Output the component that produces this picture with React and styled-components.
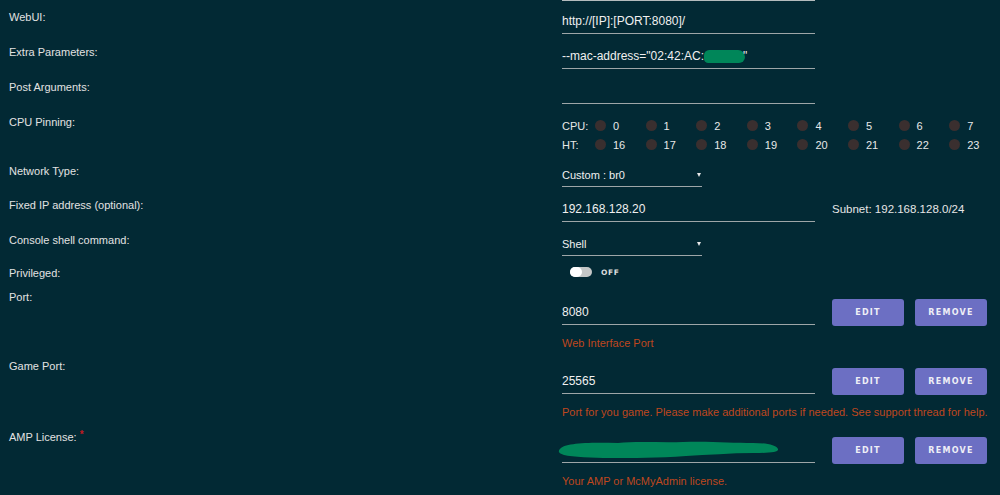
import React from 'react';
import styled, { createGlobalStyle } from 'styled-components';

const GlobalStyle = createGlobalStyle`
  html, body {
    margin: 0;
    padding: 0;
    background: #022934;
  }
  body {
    font-family: "Liberation Sans", Arial, sans-serif;
    color: #e4e4e4;
    overflow: hidden;
  }
`;

const Page = styled.div`
  width: 1000px;
  height: 495px;
  padding-left: 9px;
  box-sizing: border-box;
  overflow: hidden;
`;

const Row = styled.div`
  display: grid;
  grid-template-columns: 553px 1fr;
  height: ${props => props.h}px;
`;

const Label = styled.div`
  padding-top: 10px;
  font-size: 11px;
  line-height: 12px;
  color: #e2e2e2;
  white-space: nowrap;
`;

const Required = styled.span`
  color: #c01a22;
  font-size: 10px;
  font-weight: bold;
  vertical-align: 3px;
  margin-left: 3px;
`;

const Field = styled.div`
  padding-top: ${props => props.pt ?? 13}px;
`;

const Inline = styled.div`
  display: flex;
  align-items: ${props => props.end ? 'flex-end' : 'flex-start'};
`;

const Rule = styled.div`
  width: 253px;
  height: 1px;
  background: #b4bbbd;
`;

const TextInput = styled.div`
  width: 253px;
  height: 14px;
  font-size: 12px;
  line-height: 14px;
  padding-bottom: 5px;
  border-bottom: 1px solid #9ea6a8;
  color: #f0f0f0;
  white-space: nowrap;
  margin-bottom: ${props => props.mb || 0}px;
`;

const Select = styled.div`
  width: 140px;
  height: 14px;
  font-size: 11px;
  line-height: 14px;
  padding-bottom: 4px;
  border-bottom: 1px solid #9ea6a8;
  color: #f0f0f0;
  display: flex;
  justify-content: space-between;
  align-items: center;
`;

const Caret = styled.span`
  width: 0;
  height: 0;
  margin-right: 1px;
  border-left: 2px solid transparent;
  border-right: 2px solid transparent;
  border-top: 4px solid #e8e8e8;
`;

const Redacted = styled.span`
  display: inline-block;
  width: 41px;
  height: 13px;
  margin-right: -2px;
  border-radius: 6px 8px 7px 5px;
  background: #008659;
  vertical-align: -3px;
`;

const Scribble = styled.svg`
  display: block;
  margin: -2px 0 -2px -4px;
`;

const Subnet = styled.div`
  margin-left: 17px;
  font-size: 11.5px;
  line-height: 14px;
  color: #e6e6e6;
`;

const CpuGrid = styled.div`
  display: grid;
  grid-template-columns: 33px repeat(8, 50.6px);
  grid-auto-rows: 19px;
  align-items: center;
  font-size: 11px;
  color: #e8e8e8;
`;

const Core = styled.div`
  display: flex;
  align-items: center;
  gap: 7px;
`;

const Dot = styled.span`
  width: 11px;
  height: 11px;
  border-radius: 50%;
  background: #3a2f2f;
`;

const Switch = styled.div`
  display: flex;
  align-items: center;
  margin-left: 8px;
  gap: 9px;
`;

const Track = styled.div`
  width: 22px;
  height: 10px;
  border-radius: 5px;
  background: #c4c6c6;
  display: flex;
`;

const Knob = styled.div`
  width: 12px;
  height: 10px;
  border-radius: 5px;
  background: #ffffff;
`;

const SwitchText = styled.span`
  font-family: "DejaVu Sans", sans-serif;
  font-weight: bold;
  font-size: 7.5px;
  letter-spacing: 0.6px;
  color: #dcdcdc;
`;

const Button = styled.button`
  width: 72px;
  height: 27px;
  margin-left: ${props => props.first ? 17 : 11}px;
  border: none;
  border-radius: 3px;
  background: #6c6fc3;
  color: #eeeef6;
  font-family: "DejaVu Sans", sans-serif;
  font-weight: bold;
  font-size: 8px;
  letter-spacing: 1.3px;
  padding: 0;
  cursor: pointer;
`;

const Desc = styled.div`
  margin-top: 10px;
  font-size: 11px;
  line-height: 14px;
  color: #bf471e;
  white-space: nowrap;
`;

const cpus = [0, 1, 2, 3, 4, 5, 6, 7];

const PortField = ({ value, children, desc }) => (
  <Field pt={18}>
    <Inline end>
      <TextInput mb={1}>{children || value}</TextInput>
      <Button first>EDIT</Button>
      <Button>REMOVE</Button>
    </Inline>
    <Desc>{desc}</Desc>
  </Field>
);

const App = () => (
  <Page>
    <GlobalStyle />
    <Row h={1}>
      <div />
      <Rule />
    </Row>

    <Row h={35}>
      <Label>WebUI:</Label>
      <Field><TextInput>http://[IP]:[PORT:8080]/</TextInput></Field>
    </Row>

    <Row h={35}>
      <Label>Extra Parameters:</Label>
      <Field>
        <TextInput>--mac-address="02:42:AC:<Redacted />"</TextInput>
      </Field>
    </Row>

    <Row h={35}>
      <Label>Post Arguments:</Label>
      <Field><TextInput /></Field>
    </Row>

    <Row h={49}>
      <Label>CPU Pinning:</Label>
      <Field pt={10}>
        <CpuGrid>
          <span>CPU:</span>
          {cpus.map(n => <Core key={n}><Dot />{n}</Core>)}
          <span>HT:</span>
          {cpus.map(n => <Core key={n + 16}><Dot />{n + 16}</Core>)}
        </CpuGrid>
      </Field>
    </Row>

    <Row h={34}>
      <Label>Network Type:</Label>
      <Field><Select>Custom : br0<Caret /></Select></Field>
    </Row>

    <Row h={35}>
      <Label>Fixed IP address (optional):</Label>
      <Field>
        <Inline>
          <TextInput>192.168.128.20</TextInput>
          <Subnet>Subnet: 192.168.128.0/24</Subnet>
        </Inline>
      </Field>
    </Row>

    <Row h={33}>
      <Label>Console shell command:</Label>
      <Field><Select>Shell<Caret /></Select></Field>
    </Row>

    <Row h={24}>
      <Label>Privileged:</Label>
      <Field pt={10}>
        <Switch>
          <Track><Knob /></Track>
          <SwitchText>OFF</SwitchText>
        </Switch>
      </Field>
    </Row>

    <Row h={69}>
      <Label>Port:</Label>
      <PortField value="8080" desc="Web Interface Port" />
    </Row>

    <Row h={69}>
      <Label>Game Port:</Label>
      <PortField
        value="25565"
        desc="Port for you game. Please make additional ports if needed. See support thread for help."
      />
    </Row>

    <Row h={76}>
      <Label>AMP License:<Required>*</Required></Label>
      <PortField desc="Your AMP or McMyAdmin license.">
        <Scribble width="222" height="18" viewBox="0 0 222 18">
          <path
            d="M2,8 C6,2 30,1 60,2 C80,0 105,2 125,1 C150,0 175,2 195,2 C208,2 218,4 220,8 C221,11 212,12 196,12 C172,12 150,14 128,15 C100,17 75,17 52,17 C35,17 14,16 6,14 C0,12 0,10 2,8 Z"
            fill="#008659"
          />
        </Scribble>
      </PortField>
    </Row>
  </Page>
);

export default App;
